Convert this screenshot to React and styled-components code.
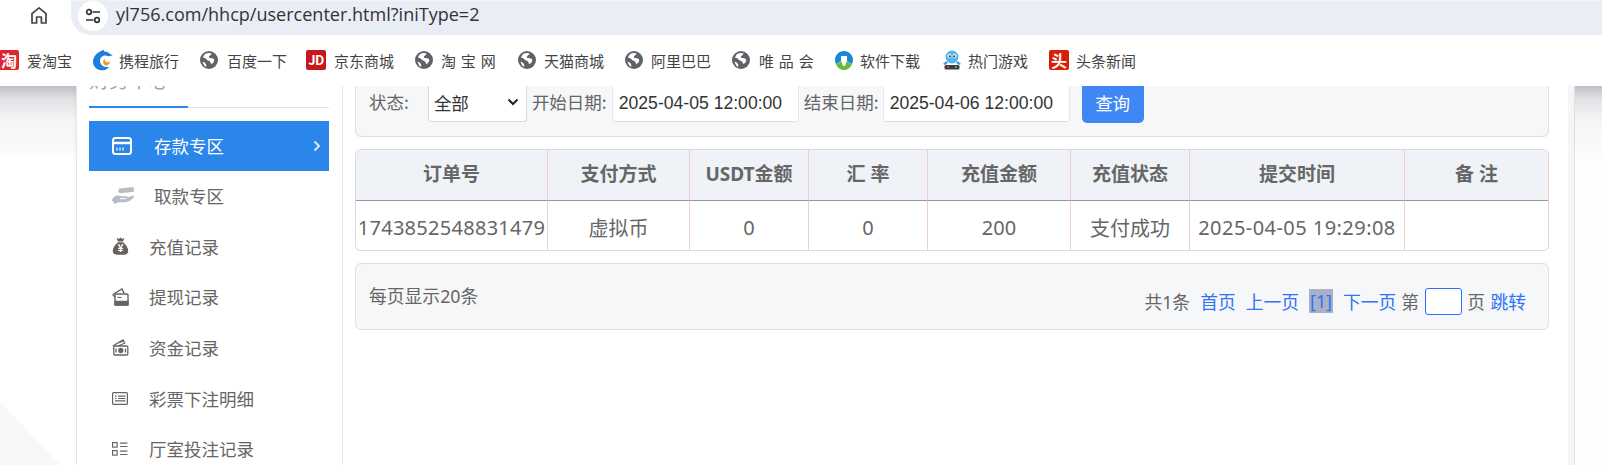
import React from "react";
import styled, { createGlobalStyle } from "styled-components";

const Global = createGlobalStyle`
  html, body { margin: 0; padding: 0; background: #fff; overflow: hidden; }
  * { box-sizing: border-box; }
  body { font-family: "Noto Sans", "Noto Sans CJK SC", sans-serif; color: #666; }
`;

const Shell = styled.div`
  width: 1602px;
  height: 465px;
  display: flex;
  flex-direction: column;
  overflow: hidden;
`;

const AddressRow = styled.div`
  height: 35px;
  display: flex;
  align-items: center;
  padding-left: 29px;
  flex: none;
`;
const HomeBtn = styled.div`
  width: 20px;
  height: 20px;
  margin-right: 22px;
  margin-top: -5px;
  color: #444;
  display: flex;
`;
const Omnibox = styled.div`
  flex: 1;
  height: 35px;
  background: #e9edf6;
  border-top: 1px solid #f1f3f9;
  border-radius: 0 0 0 20px;
  display: flex;
  align-items: center;
  padding-left: 7px;
`;
const TuneBadge = styled.div`
  width: 30px;
  height: 30px;
  border-radius: 50%;
  background: #fff;
  color: #333;
  display: flex;
  align-items: center;
  justify-content: center;
  margin-right: 8px;
  margin-top: -4px;
`;
const UrlText = styled.span`
  font-family: "Open Sans", sans-serif;
  font-size: 18.05px;
  color: #333;
  margin-top: -9px;
`;

const BookmarkRow = styled.div`
  height: 51px;
  flex: none;
  display: flex;
  align-items: center;
  padding-bottom: 1px;
  overflow: hidden;
`;
const Bookmark = styled.div`
  width: ${(p) => p.$w}px;
  flex: none;
  display: flex;
  align-items: center;
  gap: ${(p) => p.$gap || 8}px;
  font-family: "Noto Sans CJK SC", sans-serif;
  font-size: 15px;
  word-spacing: 1.5px;
  color: #444;
  white-space: nowrap;
`;
const BadgeIcon = styled.span`
  width: 20px;
  height: 20px;
  flex: none;
  margin-left: ${(p) => p.$ml || 0}px;
  background: ${(p) => p.$bg};
  border-radius: 2px;
  color: #fff;
  font-family: "Noto Sans CJK SC", sans-serif;
  font-weight: 700;
  font-size: ${(p) => p.$fs || 16}px;
  line-height: 20px;
  text-align: center;
  letter-spacing: ${(p) => p.$ls || 0}px;
`;
const IconBox = styled.span`
  width: ${(p) => p.$s || 18}px;
  height: ${(p) => p.$s || 18}px;
  flex: none;
  display: flex;
`;

const Stage = styled.div`
  flex: 1;
  min-height: 0;
  display: flex;
  overflow: hidden;
`;
const LeftGutter = styled.div`
  width: 76px;
  flex: none;
  background:
    linear-gradient(to bottom, #bec1c8 0, #e3e4e7 14px, #f6f6f7 36px, #fbfbfb 67px, #ffffff 68px) no-repeat left top / 100% 68px,
    linear-gradient(to top right, #f8f8f8 50%, rgba(255,255,255,0) 50.5%) no-repeat left bottom / 60px 63px,
    #fff;
`;
const Sidebar = styled.aside`
  width: 267px;
  flex: none;
  background: #fff;
  border-left: 1px solid #e6e6e6;
  border-right: 1px solid #e6e6e6;
  padding: 0 13px 0 12px;
  box-shadow: -2px 0 3px rgba(0, 0, 0, 0.03);
`;
const TabHead = styled.div`
  height: 22px;
  border-bottom: 1px solid #e0e2e6;
  margin-bottom: 13px;
`;
const ActiveTab = styled.div`
  width: 99px;
  height: 22px;
  border-bottom: 2px solid #2a86e8;
  display: flex;
  align-items: flex-end;
  padding-bottom: 13px;
  font-size: 20px;
  line-height: 26px;
  color: #a4a4a4;
  font-family: "Noto Sans CJK SC", sans-serif;
  white-space: nowrap;
`;
const NavItem = styled.div`
  height: ${(p) => (p.$active ? 50 : 50.7)}px;
  margin-bottom: ${(p) => (p.$active ? 0.7 : 0)}px;
  display: flex;
  align-items: center;
  padding: 0 0 ${(p) => (p.$active ? 1 : 3)}px 23px;
  background: ${(p) => (p.$active ? "#2a86e8" : "transparent")};
  color: ${(p) => (p.$active ? "#fff" : "#666")};
  font-family: "Noto Sans CJK SC", sans-serif;
  font-size: 17.5px;
`;
const NavIcon = styled.span`
  width: ${(p) => p.$w}px;
  flex: none;
  display: flex;
  align-items: center;
`;
const Chevron = styled.span`
  margin-left: auto;
  margin-right: 8px;
  display: flex;
  color: #d6e7fb;
`;

const Main = styled.main`
  width: 1225px;
  flex: none;
  padding: 0 19px 0 12px;
  background: #fff;
`;
const FilterPanel = styled.div`
  height: 51px;
  background: #f6f7f9;
  border: 1px solid #dcdfe4;
  border-top: 0;
  border-radius: 0 0 6px 6px;
  padding-left: 13px;
  display: flex;
  align-items: flex-start;
  font-size: 17.5px;
  font-family: "Noto Sans CJK SC", sans-serif;
`;
const FieldLabel = styled.label`
  flex: none;
  line-height: 31px;
  margin-right: ${(p) => p.$mr}px;
  margin-left: ${(p) => p.$ml || 0}px;
  white-space: nowrap;
`;
const SelectBox = styled.div`
  width: 99px;
  height: 36px;
  flex: none;
  background: #fff;
  border: 1px solid #d5d7db;
  border-top: 0;
  border-radius: 0 0 3px 3px;
  display: flex;
  align-items: center;
  justify-content: space-between;
  padding: 0 7px 3px 5px;
  color: #333;
  font-size: 17.5px;
`;
const DateInput = styled.div`
  width: 187px;
  height: 36px;
  flex: none;
  background: #fff;
  border-bottom: 1px solid #dcdee2;
  border-left: 1px solid #e6e8eb;
  border-right: 1px solid #e6e8eb;
  border-radius: 0 0 3px 3px;
  display: flex;
  align-items: center;
  padding-left: 6px;
  font-family: "Liberation Sans", sans-serif;
  font-size: 17.6px;
  color: #333;
  white-space: nowrap;
`;
const QueryBtn = styled.button`
  width: 62px;
  height: 37px;
  flex: none;
  margin-left: 12px;
  border: 0;
  border-radius: 0 0 5px 5px;
  background: #3f87f5;
  color: #fff;
  font-family: "Noto Sans CJK SC", sans-serif;
  font-size: 17.5px;
  padding: 0 0 5px;
`;

const TableWrap = styled.div`
  margin-top: 12px;
  border: 1px solid #d9dbdf;
  border-right-color: #eccfd0;
  border-radius: 6px;
  overflow: hidden;
  height: 102px;
`;
const Table = styled.table`
  width: 1192px;
  table-layout: fixed;
  border-collapse: separate;
  border-spacing: 0;
`;
const Col = styled.col`
  width: ${(p) => p.$w}px;
`;
const Th = styled.th`
  height: 51px;
  background: #eff2f6;
  border-bottom: 1px solid #989898;
  border-right: 1px solid #eccfd0;
  color: #666;
  font-family: "Noto Sans", "Noto Sans CJK SC", sans-serif;
  font-size: 19px;
  font-weight: 700;
  padding: 0 0 4px;
  text-align: center;
  &:last-child { border-right: 0; }
`;
const Td = styled.td`
  height: 49px;
  border-right: 1px solid #eccfd0;
  color: #666;
  font-family: "Noto Sans", "Noto Sans CJK SC", sans-serif;
  font-size: 20px;
  letter-spacing: ${(p) => p.$ls || 0}px;
  padding: 3px 0 0;
  text-align: center;
  white-space: nowrap;
  background: #fff;
  &:last-child { border-right: 0; }
`;

const PagerPanel = styled.div`
  margin-top: 12px;
  height: 67px;
  background: #f6f7f9;
  border: 1px solid #dcdfe4;
  border-radius: 6px;
  display: flex;
  justify-content: space-between;
  align-items: center;
  padding: 0 22px 0 13px;
  font-size: 17.8px;
  font-family: "Noto Sans", "Noto Sans CJK SC", sans-serif;
  color: #666;
`;
const PageNote = styled.span`
  margin-bottom: 4px;
`;
const Pager = styled.div`
  display: flex;
  align-items: center;
  gap: 10px;
  margin-top: 9px;
`;
const JumpGroup = styled.div`
  display: flex;
  align-items: center;
  gap: 5.5px;
  margin-left: -5px;
`;
const PagerLink = styled.a`
  color: #2f72f5;
`;
const CurrentPage = styled.span`
  height: 24px;
  line-height: 24px;
  padding: 0 1px;
  background: #a9aec9;
  color: #2f72f5;
`;
const PageInput = styled.div`
  width: 37px;
  height: 27px;
  background: #fff;
  border: 1px solid #2a6fff;
  border-radius: 3px;
`;

const RightStrip = styled.div`
  width: 7px;
  flex: none;
  background: #f5f5f5;
  border-right: 1px solid #e0e0e0;
`;
const RightGutter = styled.div`
  flex: 1;
  background:
    linear-gradient(to bottom, #bec1c8 0, #e3e4e7 14px, #f6f6f7 36px, #fbfbfb 67px, #fdfdfd 68px) no-repeat left top / 100% 68px,
    #fdfdfd;
`;

const HomeIcon = () => (
  <svg width="20" height="20" viewBox="0 0 20 20" fill="none" stroke="currentColor" strokeWidth="1.7" strokeLinejoin="round">
    <path d="M3 8.6 10 2.8l7 5.8V18h-4.6v-6H7.6v6H3z" />
  </svg>
);
const TuneIcon = () => (
  <svg width="18" height="18" viewBox="0 0 18 18" fill="none" stroke="currentColor" strokeWidth="1.7">
    <circle cx="5" cy="5" r="2.3" />
    <path d="M8.5 5H16M2 13h7.5" />
    <circle cx="13" cy="13" r="2.3" />
  </svg>
);
const EarthIcon = () => (
  <IconBox>
    <svg width="18" height="18" viewBox="0 0 18 18">
      <circle cx="9" cy="9" r="9" fill="#5f6368" />
      <path d="M6 2.5c2-.8 4.2-.6 5.6 0-.3 1.4-1.8 1.8-2.6 2.9-.6.9.4 1.6 1.6 1.7 1.5.1 3.4.5 3.6 1.9.2 1.5-1 3-2.2 3.8-.8.5-1.3-.7-1.6-1.6-.4-1-1.7-1.3-2.6-1.9C6.600 9.500 7 8.400 5.900 7.700 5 7.100 3.400 7.200 3 6.600 3.400 5 4.600 3.300 6 2.500z" fill="#fff" />
      <path d="M2.600 10.500c1.300.4 2.600 1.300 3.300 2.500.5.900.4 2.100.1 3-1.700-.8-3-3.400-3.400-5.500z" fill="#fff" />
    </svg>
  </IconBox>
);
const DolphinIcon = () => (
  <IconBox $s={22}>
    <svg width="22" height="22" viewBox="0 0 22 22">
      <path d="M9 2.500 12.500.8c.5.6.6 1.100.5 1.600 2.600-.2 5 .9 6.400 2.800l2.400 1-2.600.9c-1.600.5-3-.5-4.700-.6-3.100-.2-5.500 2.300-5.500 5.300 0 3.300 2.600 6 6.200 6.300 1 .1 2 0 3-.3-1.500 2.300-4 3.600-6.800 3.400C6.200 21.800 2.300 17.800 2 13 1.800 9 4.700 4.700 9 2.500z" fill="#1f7de0" />
      <path d="M13.500 9.500c.1 2.800 2 3.800 3.300 3.800.9 0 1.800-.4 2.700-1-.6 2.700-2.500 4.300-4.500 4.200-2.800-.1-4.200-4-1.500-7z" fill="#f39a2b" />
    </svg>
  </IconBox>
);
const SoftIcon = () => (
  <IconBox>
    <svg width="18" height="20" viewBox="0 0 18 20">
      <path d="M9 0c5 0 9 4 9 9 0 1.600-.4 3-1.100 4.300L12 10V5H6v5l-5 3.300C.4 12 0 10.600 0 9c0-5 4-9 9-9z" fill="#1a86d8" />
      <path d="M1 13.500 6.500 10c.2 2.500 1 4.500 2.500 5.500 1.500-1 2.300-3 2.500-5.500l5.500 3.500C15.500 17 12.600 19 9 19s-6.500-2-8-5.500z" fill="#69b93c" />
      <rect x="8" y="3" width="2" height="2" fill="#1a86d8" />
      <rect x="8" y="6.500" width="2" height="7" fill="#fff" />
    </svg>
  </IconBox>
);
const RobotIcon = () => (
  <IconBox $s={20}>
    <svg width="20" height="20" viewBox="0 0 20 20">
      <ellipse cx="10" cy="7" rx="6.500" ry="6.500" fill="#55b4ee" />
      <circle cx="7.500" cy="6" r="2" fill="#fff" />
      <circle cx="12.500" cy="6" r="2" fill="#fff" />
      <circle cx="7.800" cy="6.200" r="1" fill="#123" />
      <circle cx="12.200" cy="6.200" r="1" fill="#123" />
      <path d="M4 11 1 14l2 1 3-2zM16 11l3 3-2 1-3-2z" fill="#3d9bd8" />
      <rect x="2.500" y="15" width="15" height="4.500" rx="1.500" fill="#3d3d3d" />
      <circle cx="6" cy="17" r="1" fill="#e04a3c" />
      <circle cx="14" cy="17" r="1" fill="#6cc04a" />
    </svg>
  </IconBox>
);

const CardIcon = () => (
  <svg width="20" height="18" viewBox="0 0 20 18" fill="none" stroke="#fff" strokeWidth="2">
    <rect x="1" y="1" width="18" height="16" rx="2.500" />
    <path d="M1 6h18" strokeWidth="2.500" />
    <path d="M5 10.500v3M8 10.500v3M11 10.500v3" strokeWidth="1.200" />
  </svg>
);
const HandIcon = () => (
  <svg width="23" height="18" viewBox="0 0 23 18" fill="#b6bdc4">
    <path d="M7 1.500 21.500 0l.5 4.800-13.800 1.400-2.200-1.200z" />
    <path d="M0 13.500C.6 10.800 3 8.500 5.800 8.500c1.400 0 2.400.7 3.900.7h4.500c1 0 1.500.6 1.400 1.200l5.400-2c.9-.1 1.400.7.900 1.500-1.900 2.500-4.600 4.800-8.400 5.300H6.500L2.800 17z" />
    <path d="M8 11.700h6" stroke="#fff" strokeWidth="1" />
  </svg>
);
const BagIcon = () => (
  <svg width="17" height="18" viewBox="0 0 17 18">
    <path d="M4.500.8 6.500 2l2-1.400 2 1.400 2-1.200-1.400 3.700H5.900z" fill="#6a5f59" />
    <path d="M5.800 5.300h5.400c2.600 2.300 5 5.600 5 8.500 0 3-2 3.900-4 3.900H4.800c-2 0-4-.9-4-3.900 0-2.900 2.400-6.200 5-8.500z" fill="#6a5f59" />
    <text x="8.500" y="15" textAnchor="middle" fontSize="10" fontWeight="700" fontFamily="Liberation Sans" fill="#fff">¥</text>
  </svg>
);
const WalletIcon = () => (
  <svg width="17" height="18" viewBox="0 0 17 18" fill="none" stroke="#666" strokeWidth="1.400">
    <path d="M.8 6.500 10 .9l2.200 4.600" />
    <path d="M.8 6.500 3 9" />
    <rect x="3" y="6" width="13" height="11" rx="1" />
    <path d="M3 13.500h13V17H3z" fill="#666" />
    <path d="M5.500 9.500h4" strokeWidth="1.200" />
  </svg>
);
const FundIcon = () => (
  <svg width="17" height="17" viewBox="0 0 17 17" fill="none" stroke="#666" strokeWidth="1.300">
    <path d="M.8 7 11 1l2 3.500M3.500 5l8-3.200M6 7l7-3" />
    <rect x="1.800" y="7" width="14" height="9" rx="1" />
    <circle cx="8.800" cy="11.500" r="2" fill="#666" />
    <path d="M4 9.500v4M13.500 9.500v4" />
  </svg>
);
const ListCardIcon = () => (
  <svg width="16" height="13" viewBox="0 0 16 13" fill="none" stroke="#666" strokeWidth="1.200">
    <rect x=".6" y=".6" width="14.800" height="11.800" rx="1" />
    <path d="M3 4.200h1.500M6 4.200h7.500M3 6.500h1.500M6 6.500h7.500M3 8.800h10.500" />
  </svg>
);
const RowsIcon = () => (
  <svg width="16" height="14" viewBox="0 0 16 14" fill="none" stroke="#666" strokeWidth="1.200">
    <rect x=".6" y=".6" width="4.500" height="4.500" />
    <rect x=".6" y="8.600" width="4.500" height="4.500" />
    <path d="M8 1.200h7.500M8 4.500h7.500M8 9.200h7.500M8 12.500h7.500" />
  </svg>
);
const ChevronIcon = () => (
  <svg width="8" height="12" viewBox="0 0 8 12" fill="none" stroke="currentColor" strokeWidth="2">
    <path d="M1.500 1.500 6 6l-4.500 4.500" />
  </svg>
);
const SelectArrow = () => (
  <svg width="12" height="8" viewBox="0 0 12 8" fill="none" stroke="#222" strokeWidth="2">
    <path d="M1.500 1.500 6 6l4.500-4.500" />
  </svg>
);

const navItems = [
  { label: "取款专区", icon: <HandIcon />, w: 42 },
  { label: "充值记录", icon: <BagIcon />, w: 37 },
  { label: "提现记录", icon: <WalletIcon />, w: 37 },
  { label: "资金记录", icon: <FundIcon />, w: 37 },
  { label: "彩票下注明细", icon: <ListCardIcon />, w: 37 },
  { label: "厅室投注记录", icon: <RowsIcon />, w: 37 },
];
const colWidths = [192, 142, 119, 119, 143, 119, 215, 143];
const heads = ["订单号", "支付方式", "USDT金额", "汇 率", "充值金额", "充值状态", "提交时间", "备 注"];
const cells = [
  { text: "1743852548831479", ls: 0.28 },
  { text: "虚拟币" },
  { text: "0" },
  { text: "0" },
  { text: "200" },
  { text: "支付成功" },
  { text: "2025-04-05 19:29:08", ls: 0.45 },
  { text: "" },
];

export default function App() {
  return (
    <Shell>
      <Global />
      <AddressRow>
        <HomeBtn><HomeIcon /></HomeBtn>
        <Omnibox>
          <TuneBadge><TuneIcon /></TuneBadge>
          <UrlText>yl756.com/hhcp/usercenter.html?iniType=2</UrlText>
        </Omnibox>
      </AddressRow>
      <BookmarkRow>
        <Bookmark $w={91} $gap={8}><BadgeIcon $bg="#e0232e" $ml={-1}>淘</BadgeIcon>爱淘宝</Bookmark>
        <Bookmark $w={109} $gap={6}><DolphinIcon />携程旅行</Bookmark>
        <Bookmark $w={106} $gap={9}><EarthIcon />百度一下</Bookmark>
        <Bookmark $w={109}><BadgeIcon $bg="#c8161d" $fs={13} $ls={-0.5}>JD</BadgeIcon>京东商城</Bookmark>
        <Bookmark $w={103} $gap={8}><EarthIcon />淘 宝 网</Bookmark>
        <Bookmark $w={107} $gap={8}><EarthIcon />天猫商城</Bookmark>
        <Bookmark $w={107} $gap={8}><EarthIcon />阿里巴巴</Bookmark>
        <Bookmark $w={103} $gap={9}><EarthIcon />唯 品 会</Bookmark>
        <Bookmark $w={107} $gap={7}><SoftIcon />软件下载</Bookmark>
        <Bookmark $w={107} $gap={6}><RobotIcon />热门游戏</Bookmark>
        <Bookmark $w={100} $gap={7}><BadgeIcon $bg="#d81e06">头</BadgeIcon>头条新闻</Bookmark>
      </BookmarkRow>
      <Stage>
        <LeftGutter />
        <Sidebar>
          <TabHead><ActiveTab>财务中心</ActiveTab></TabHead>
          <NavItem $active>
            <NavIcon $w={42}><CardIcon /></NavIcon>
            存款专区
            <Chevron><ChevronIcon /></Chevron>
          </NavItem>
          {navItems.map((it) => (
            <NavItem key={it.label}>
              <NavIcon $w={it.w}>{it.icon}</NavIcon>
              {it.label}
            </NavItem>
          ))}
        </Sidebar>
        <Main>
          <FilterPanel>
            <FieldLabel $mr={19}>状态:</FieldLabel>
            <SelectBox>全部<SelectArrow /></SelectBox>
            <FieldLabel $ml={5} $mr={5}>开始日期:</FieldLabel>
            <DateInput>2025-04-05 12:00:00</DateInput>
            <FieldLabel $ml={5} $mr={4}>结束日期:</FieldLabel>
            <DateInput>2025-04-06 12:00:00</DateInput>
            <QueryBtn>查询</QueryBtn>
          </FilterPanel>
          <TableWrap>
            <Table>
              <colgroup>
                {colWidths.map((w, i) => <Col key={i} $w={w} />)}
              </colgroup>
              <thead>
                <tr>{heads.map((h) => <Th key={h}>{h}</Th>)}</tr>
              </thead>
              <tbody>
                <tr>{cells.map((c, i) => <Td key={i} $ls={c.ls}>{c.text}</Td>)}</tr>
              </tbody>
            </Table>
          </TableWrap>
          <PagerPanel>
            <PageNote>每页显示20条</PageNote>
            <Pager>
              <span>共1条</span>
              <PagerLink>首页</PagerLink>
              <PagerLink>上一页</PagerLink>
              <CurrentPage>[1]</CurrentPage>
              <PagerLink>下一页</PagerLink>
              <JumpGroup>
                <span>第</span>
                <PageInput />
                <span>页</span>
                <PagerLink>跳转</PagerLink>
              </JumpGroup>
            </Pager>
          </PagerPanel>
        </Main>
        <RightStrip />
        <RightGutter />
      </Stage>
    </Shell>
  );
}
